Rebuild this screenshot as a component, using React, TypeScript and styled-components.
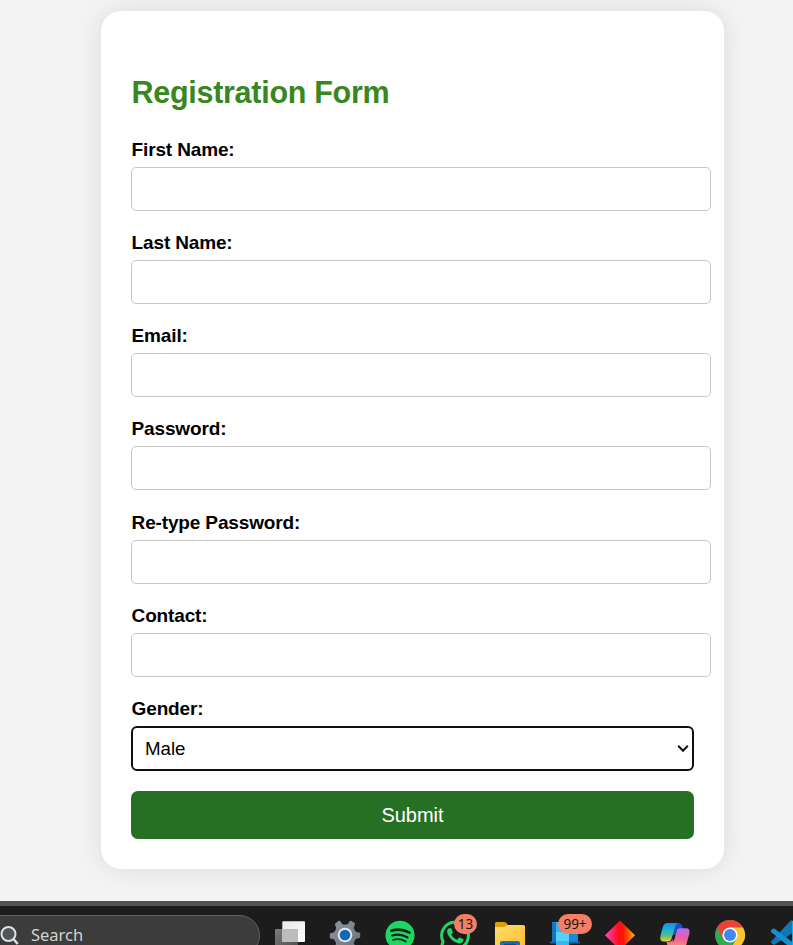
import React from "react";
import styled, { createGlobalStyle } from "styled-components";

const GlobalStyle = createGlobalStyle`
  * { box-sizing: border-box; }
  html, body { margin: 0; padding: 0; background: #f3f3f3; overflow: hidden; }
  body { font-family: "Liberation Sans", Arial, sans-serif; color: #000; }
`;

const Screen = styled.div`
  display: flex;
  flex-direction: column;
  height: 945px;
  overflow: hidden;
`;

const Page = styled.main`
  flex: 0 0 901px;
  padding: 11px 69px 0 101px;
  background: #f3f3f3;
`;

const Card = styled.form`
  width: 623px;
  height: 858px;
  padding: 62px 30px 0;
  border-radius: 20px;
  background: #fff;
  box-shadow: 0 0 24px rgba(0, 0, 0, 0.1);
`;

const Title = styled.h2`
  margin: 0;
  height: 54px;
  padding-left: 0.5px;
  font-size: 30.5px;
  line-height: 38px;
  font-weight: 700;
  letter-spacing: -0.28px;
  color: #388723;
`;

const Field = styled.div`
  height: 93.15px;
`;

const Label = styled.label`
  display: block;
  height: 40px;
  padding-left: 0.6px;
  line-height: 45px;
  font-size: 19px;
  font-weight: 700;
  letter-spacing: -0.15px;
`;

const Input = styled.input`
  display: block;
  width: 580px;
  height: 44px;
  padding: 0 12px;
  border: 1px solid #c8c8c8;
  border-radius: 5px;
  background: #fff;
  font: 19px "Liberation Sans", Arial, sans-serif;
  outline: none;
`;

const SelectBox = styled.div`
  display: flex;
  align-items: center;
  justify-content: space-between;
  width: 563px;
  height: 45px;
  padding: 0 3px 0 12px;
  border: 2px solid #101010;
  border-radius: 6px;
  font-size: 18.7px;
  line-height: 43px;
`;

const Submit = styled.button`
  display: block;
  width: 563px;
  height: 48px;
  margin-top: 20px;
  padding: 1px 0 0;
  border: 0;
  border-radius: 7px;
  background: #267023;
  color: #fff;
  font: 20px "Liberation Sans", Arial, sans-serif;
`;

const Taskbar = styled.footer`
  display: flex;
  align-items: flex-start;
  height: 44px;
  border-top: 5px solid #515359;
  background: #1c1c1c;
  overflow: hidden;
`;

const Search = styled.div`
  display: flex;
  flex: 0 0 280px;
  align-items: flex-start;
  gap: 12px;
  width: 280px;
  height: 41px;
  margin: 9px 10px 0 -20px;
  padding: 10px 0 0 19px;
  border: 1px solid #626262;
  border-radius: 21px;
  background: #3c3c3c;
  color: #d2d2d2;
  font: 16.5px/18px "Noto Sans", "Open Sans", sans-serif;
`;

const Apps = styled.div`
  display: flex;
  flex: 0 0 550px;
`;

const AppSlot = styled.div`
  position: relative;
  flex: 0 0 55px;
  height: 50px;
  svg { display: block; }
`;

const Badge = styled.span<{ $left: number; $width: number }>`
  position: absolute;
  left: ${(p) => p.$left}px;
  top: 8px;
  width: ${(p) => p.$width}px;
  height: 20px;
  border-radius: 11px;
  background: #f57f65;
  color: #151515;
  text-align: center;
  font: 13.5px/20px "Noto Sans", "Open Sans", sans-serif;
`;

const fields = ["First Name:", "Last Name:", "Email:", "Password:", "Re-type Password:", "Contact:"];

/* Each taskbar drawing uses a 55 x 50 cell, centred on x = 20. */
const Cell = ({ children }: { children: React.ReactNode }) => (
  <svg width="55" height="50" viewBox="0 0 55 50" fill="none">{children}</svg>
);

const TaskView = () => (
  <Cell>
    <defs>
      <linearGradient id="tvf" x1="0" y1="0" x2="1" y2="1"><stop stopColor="#e8e8e8" /><stop offset="1" stopColor="#fff" /></linearGradient>
      <linearGradient id="tvb" x1="0" y1="0" x2="1" y2="1"><stop stopColor="#7c7c7c" /><stop offset="1" stopColor="#4b4b4b" /></linearGradient>
    </defs>
    <rect x="5" y="23" width="23" height="20" rx="1" fill="url(#tvb)" />
    <rect x="12.3" y="15.3" width="22.7" height="20.7" rx="1" fill="url(#tvf)" />
    <path d="M12.3 23H28v13H12.3z" fill="#bcbcbc" />
  </Cell>
);

const Settings = () => (
  <Cell>
    <defs><linearGradient id="gear" x1="0" y1="0" x2="1" y2="1"><stop stopColor="#8e969e" /><stop offset="1" stopColor="#69727b" /></linearGradient></defs>
    <path d="M13.5 15q1.5-.6 2 .4l1.3 2.2q.6 1 1.8 1h2.8q1.2 0 1.8-1l1.3-2.2q.5-1 2-.4l2.8 1.7q1 .7.6 1.8l-.9 2.5q-.4 1.1.2 2l1.2 2.1q.6 1 1.8 1.2l2 .3q1 .2 1 1.3v3q0 1-1 1.2l-2.2.4q-1 .2-1.5 1.1l-1.3 2.3q-.5 1 0 2l1 2.4L25 44H15l-5.2-3.2 1-2.4q.5-1 0-2l-1.3-2.3Q9 33.2 8 33l-2.2-.4q-1-.2-1-1.2v-3q0-1.1 1-1.3l2-.3q1.2-.2 1.8-1.2l1.2-2.1q.6-.9.2-2l-.9-2.5q-.4-1.1.6-1.8z" fill="url(#gear)" />
    <circle cx="20" cy="29" r="7.3" fill="#e3e6e8" /><circle cx="20" cy="29" r="5.3" fill="#1068b9" />
  </Cell>
);

const Spotify = () => (
  <Cell>
    <circle cx="20" cy="29.2" r="14.5" fill="#1ed760" />
    <g stroke="#19251c" strokeLinecap="round">
      <path d="M11.5 24.7c6-1.8 12.7-1 18 2" strokeWidth="2.7" />
      <path d="M12.2 29.5c5.2-1.5 10.8-.8 15.3 1.9" strokeWidth="2.2" />
      <path d="M13 33.8c4.5-1.2 8.9-.6 12.8 1.7" strokeWidth="1.8" />
    </g>
  </Cell>
);

const WhatsApp = () => (
  <Cell>
    <path d="M6 43l2-7.5A13.4 13.4 0 1 1 13 41z" stroke="#25d366" strokeWidth="3" />
    <path d="M13.2 22.8l2-.7c.6-.1 1 .2 1.3.8l1.2 2.9c.2.5 0 1-.3 1.3l-1.1 1.3c1.4 2.6 3.3 4.3 5.9 5.4l1.6-1.9c.3-.4.7-.5 1.2-.3l2.9 1.4c.6.3.7.7.6 1.3-.5 2.3-2.5 3.3-4.7 3.1-5.2-.9-10.2-5.7-11.6-10.6-.3-1.6 0-3 1-4z" fill="#25d366" />
  </Cell>
);

const Folder = () => (
  <Cell>
    <defs><linearGradient id="fold" x1="0" y1="0" x2="1" y2="1"><stop stopColor="#ffdc72" /><stop offset="1" stopColor="#ffbf26" /></linearGradient></defs>
    <path d="M5 29V17.5q0-1.5 1.5-1.5H14q1.5 0 2.5 1.2l1.5 1.8L16 23z" fill="#dca008" />
    <path d="M5 21h9l3.5-2H33.5q1.5 0 1.5 1.5V43H5z" fill="url(#fold)" />
    <path d="M10 43v-6q0-2 2-2h16q2 0 2 2v6z" fill="#146eb9" /><path d="M14 38.5h12" stroke="#084d87" strokeWidth="1.5" />
  </Cell>
);

const Laptop = () => (
  <Cell>
    <path d="M7 16h26v20H7z" fill="#168bd7" /><path d="M11 16h10v20H11z" fill="#35b6f1" /><path d="M11 26h13v10H11z" fill="#56d1fa" />
    <path d="M7 17h4v19H7z" fill="#1675be" /><path d="M5 35.5h30v2H5z" fill="#1169aa" /><path d="M11 35h13v5H11z" fill="#35b6ee" />
  </Cell>
);

const Diamond = () => (
  <Cell>
    <defs><linearGradient id="diam"><stop stopColor="#ff48c8" /><stop offset=".45" stopColor="#ff0d16" /><stop offset=".62" stopColor="#ff1608" /><stop offset="1" stopColor="#ffb900" /></linearGradient></defs>
    <path d="M20 14.5L35 29.3 20 44 5 29.3z" fill="url(#diam)" />
  </Cell>
);

const Copilot = () => (
  <Cell>
    <defs>
      <linearGradient id="copa" x1="0" y1="0" x2="0" y2="1"><stop stopColor="#168eea" /><stop offset=".4" stopColor="#20b3cf" /><stop offset=".7" stopColor="#62bb70" /><stop offset="1" stopColor="#edd42d" /></linearGradient>
      <linearGradient id="copb" x1="0" y1="0" x2="0" y2="1"><stop stopColor="#b36bf3" /><stop offset=".5" stopColor="#ed6099" /><stop offset="1" stopColor="#ff9869" /></linearGradient>
    </defs>
    <path d="M14 17h9.5q2.8 0 3.6 2.8l1.2 3.7h-4q-2 0-2.8 2.5l-1 3H16z" fill="#1950c8" />
    <path d="M13 17h10q-1.8.5-2.6 3l-3.6 12q-1 3.5-4 3.5H9q-5 0-3.4-6.3L8.2 20q1-3 4.8-3z" fill="url(#copa)" />
    <path d="M24.8 22.3H31q4.7 0 3.2 6l-2.7 9.5q-1.4 5.2-5.3 5.2H15q-2.5-2-3.4-7h1.6q3.9 0 5-4l-.7 3.4q1.4 0 2.1-3l2-7q.8-3.1 3.2-3.1z" fill="url(#copb)" />
  </Cell>
);

const Chrome = () => (
  <Cell>
    <circle cx="20" cy="29" r="15" fill="#34a853" />
    <path d="M7 21.5A15 15 0 0 1 33 21.5H20L13.5 32.8z" fill="#ea4335" />
    <path d="M20 21.5h13A15 15 0 0 1 20 44l6.5-11.2z" fill="#fbc52f" />
    <circle cx="20" cy="29" r="7.6" fill="#fff" /><circle cx="20" cy="29" r="6" fill="#4285f4" />
  </Cell>
);

const Code = () => (
  <Cell>
    <path d="M26 14.3L34 17v6L9.8 38.5q-.9.6-1.7 0l-2-1.8q-.6-.8.2-1.5z" fill="#1176b7" />
    <path d="M6 24.3l2-1.6q.8-.6 1.7 0L34 41v5l-6-2.3L6 26z" fill="#168fd1" />
    <path d="M26 14.3L34 17v28l-7-3z" fill="#22a6eb" clipPath="inset(0 0 0 1px)" />
  </Cell>
);

export default function App() {
  return (
    <>
      <GlobalStyle />
      <Screen>
        <Page>
          <Card onSubmit={(e) => e.preventDefault()}>
            <Title>Registration Form</Title>
            {fields.map((name) => (
              <Field key={name}>
                <Label htmlFor={name}>{name}</Label>
                <Input id={name} type={name.includes("Password") ? "password" : "text"} />
              </Field>
            ))}
            <Label as="div">Gender:</Label>
            <SelectBox role="combobox" aria-label="Gender" aria-expanded="false">
              Male
              <svg width="12" height="9" viewBox="0 0 12 9" fill="none">
                <path d="M1.2 1.8L6 6.7l4.8-4.9" stroke="#101010" strokeWidth="2" />
              </svg>
            </SelectBox>
            <Submit type="submit">Submit</Submit>
          </Card>
        </Page>
        <Taskbar>
          <Search>
            <svg width="19" height="20" viewBox="0 0 19 20" fill="none" stroke="#dce1e5" strokeWidth="2">
              <circle cx="8.5" cy="8" r="7" fill="#50555a" /><path d="M13.5 13l4.2 5" strokeWidth="2.4" />
            </svg>
            Search
          </Search>
          <Apps>
            <AppSlot><TaskView /></AppSlot>
            <AppSlot><Settings /></AppSlot>
            <AppSlot><Spotify /></AppSlot>
            <AppSlot><WhatsApp /><Badge $left={19} $width={23}>13</Badge></AppSlot>
            <AppSlot><Folder /></AppSlot>
            <AppSlot><Laptop /><Badge $left={13} $width={34}>99+</Badge></AppSlot>
            <AppSlot><Diamond /></AppSlot>
            <AppSlot><Copilot /></AppSlot>
            <AppSlot><Chrome /></AppSlot>
            <AppSlot><Code /></AppSlot>
          </Apps>
        </Taskbar>
      </Screen>
    </>
  );
}
